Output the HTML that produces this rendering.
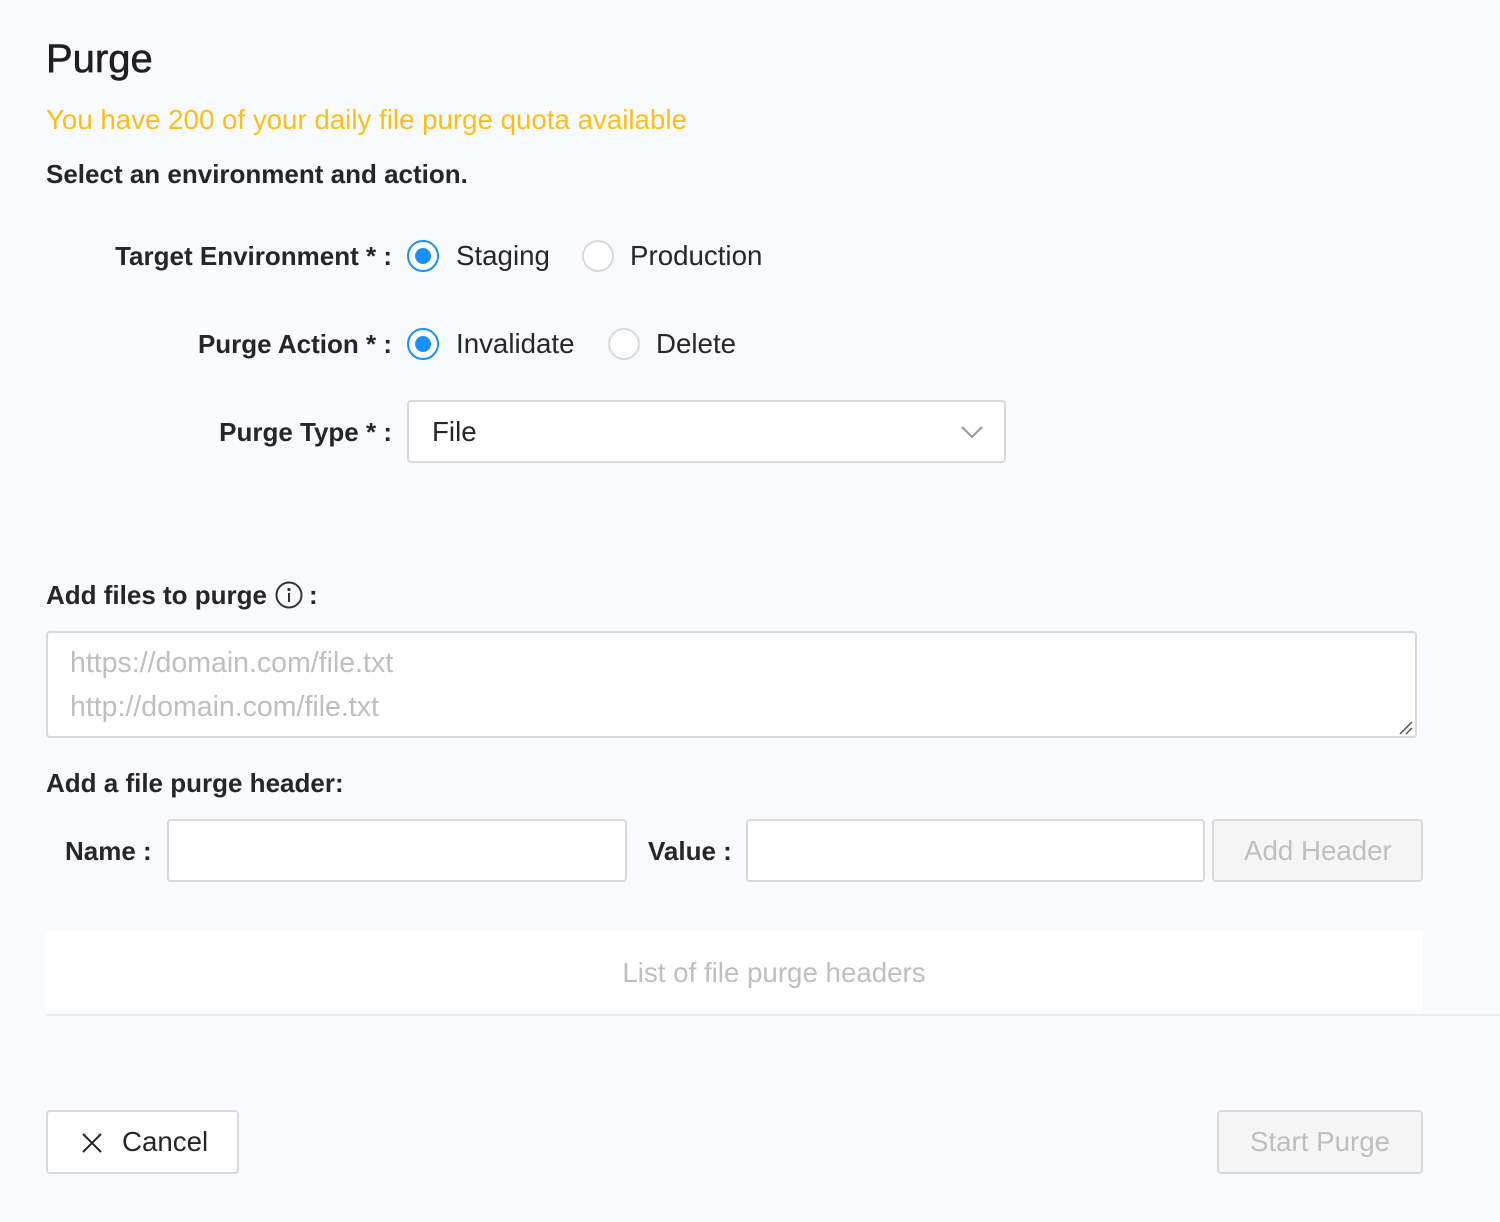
<!DOCTYPE html>
<html><head><meta charset="utf-8"><style>
*{box-sizing:border-box;margin:0;padding:0}
body{width:1500px;height:1222px;background:#f9fafe;font-family:"Liberation Sans",sans-serif;color:#262626;position:relative;overflow:hidden}
.a{position:absolute;white-space:nowrap}
.t{font-size:27.7px;line-height:30px}
.b{font-weight:bold;font-size:26px}
.radio{position:absolute;width:32px;height:32px;border-radius:50%;border:2px solid #d9d9d9;background:#fff}
.radio.on{border-color:#1890ff}
.radio.on:after{content:"";position:absolute;left:6px;top:6px;width:16px;height:16px;border-radius:50%;background:#1890ff}
.box{position:absolute;background:#fff;border:2px solid #d9d9d9;border-radius:4px}
</style></head><body>
<div class="a" style="left:46px;top:37px;font-size:40px;line-height:44px;color:#1f1f1f;-webkit-text-stroke:0.6px #1f1f1f">Purge</div>
<div class="a t" style="left:46px;top:105px;color:#fbbf17">You have 200 of your daily file purge quota available</div>
<div class="a t b" style="left:46px;top:159px">Select an environment and action.</div>

<div class="a t b" style="right:1108px;top:241px">Target Environment * :</div>
<div class="radio on" style="left:407px;top:240px"></div>
<div class="a t" style="left:456px;top:241px">Staging</div>
<div class="radio" style="left:582px;top:240px"></div>
<div class="a t" style="left:630px;top:241px">Production</div>

<div class="a t b" style="right:1108px;top:329px">Purge Action * :</div>
<div class="radio on" style="left:407px;top:328px"></div>
<div class="a t" style="left:456px;top:329px">Invalidate</div>
<div class="radio" style="left:608px;top:328px"></div>
<div class="a t" style="left:656px;top:329px">Delete</div>

<div class="a t b" style="right:1108px;top:417px">Purge Type * :</div>
<div class="box" style="left:407px;top:400px;width:599px;height:63px"></div>
<div class="a t" style="left:432px;top:417px">File</div>
<svg class="a" style="left:960px;top:424px" width="24" height="16"><path d="M2 3 L12 13 L22 3" fill="none" stroke="#999" stroke-width="2"/></svg>

<div class="a t b" style="left:46px;top:580px">Add files to purge</div>
<svg class="a" style="left:275px;top:581px" width="30" height="30"><circle cx="14" cy="14" r="12.5" fill="none" stroke="#333" stroke-width="2"/><circle cx="14" cy="8.5" r="1.6" fill="#333"/><path d="M14 12v9" stroke="#333" stroke-width="2"/></svg>
<div class="a t b" style="left:309px;top:580px">:</div>
<div class="box" style="left:46px;top:631px;width:1371px;height:107px"></div>
<div class="a t" style="left:70px;top:648px;color:#bfbfbf;font-size:28.5px">https://domain.com/file.txt</div>
<div class="a t" style="left:70px;top:692px;color:#bfbfbf;font-size:28.5px">http://domain.com/file.txt</div>
<svg class="a" style="left:1398px;top:720px" width="16" height="16"><path d="M2 14 L14 2 M8 14 L14 8" stroke="#555" stroke-width="1.5"/></svg>

<div class="a t b" style="left:46px;top:768px">Add a file purge header:</div>
<div class="a t b" style="left:65px;top:836px">Name :</div>
<div class="box" style="left:167px;top:819px;width:460px;height:63px"></div>
<div class="a t b" style="left:648px;top:836px">Value :</div>
<div class="box" style="left:746px;top:819px;width:459px;height:63px"></div>
<div class="box" style="left:1212px;top:819px;width:211px;height:63px;background:#f5f5f5"></div>
<div class="a t" style="left:1244px;top:836px;color:#bfbfbf">Add Header</div>

<div class="a" style="left:46px;top:931px;width:1377px;height:83px;background:#fff"></div>
<div class="a" style="left:46px;top:1014px;width:1454px;height:2px;background:#ececec"></div>
<div class="a t" style="left:0;width:1548px;text-align:center;top:958px;color:#bfbfbf">List of file purge headers</div>

<div class="box" style="left:46px;top:1110px;width:193px;height:64px"></div>
<svg class="a" style="left:81px;top:1132px" width="22" height="22"><path d="M2 2 L20 20 M20 2 L2 20" stroke="#262626" stroke-width="2"/></svg>
<div class="a t" style="left:122px;top:1127px">Cancel</div>
<div class="box" style="left:1217px;top:1110px;width:206px;height:64px;background:#f5f5f5"></div>
<div class="a t" style="left:1250px;top:1127px;color:#bfbfbf">Start Purge</div>
</body></html>
